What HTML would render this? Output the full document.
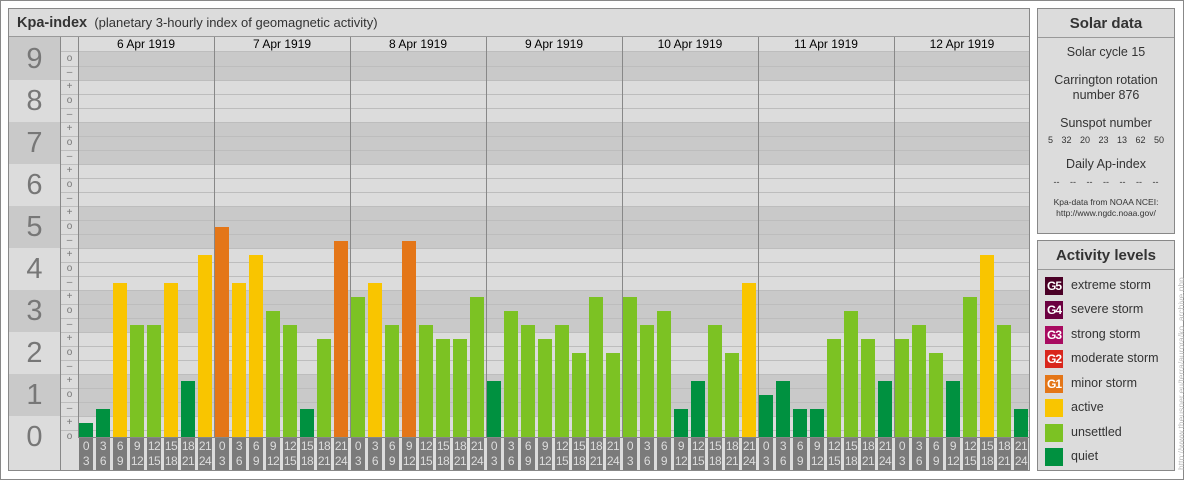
<!DOCTYPE html><html><head><style>
*{margin:0;padding:0;box-sizing:border-box}
body{width:1184px;height:480px;background:#fff;position:relative;overflow:hidden;font-family:"Liberation Sans",sans-serif}
.a{position:absolute}
.bd{background:#c9c9c9}.bl{background:#dcdcdc}
.num{position:absolute;left:9px;width:51px;text-align:center;font-size:29px;color:#777;}
.sg{position:absolute;left:61px;width:17px;text-align:center;font-size:10px;color:#777;height:14px;line-height:14px}
.gl{position:absolute;left:61px;width:968px;height:1px;background:#bdbdbd}
.vl{position:absolute;top:37px;width:1px;height:401px;background:#888}
.bar{position:absolute;width:14px}
.q{background:#009140}.u{background:#7cc223}.y{background:#f9c500}.o{background:#e47618}
.lb{position:absolute;top:438px;width:14px;height:32px;background:#7b7b7b;color:#ddd;font-size:12px;line-height:15px;text-align:center;letter-spacing:-0.5px;padding-top:1px}
.dt{position:absolute;top:37px;height:14px;width:136px;text-align:center;font-size:12px;line-height:15px;color:#000}
.pn{position:absolute;background:#dcdcdc;border:1px solid #888}
.pt{height:29px;border-bottom:1px solid #999;text-align:center;font-weight:bold;font-size:15px;line-height:29px;color:#333}
.st{text-align:center;color:#333;font-size:12.5px}
.li{position:absolute;left:7px;height:20px;font-size:12.5px;color:#333;line-height:20px}
.li i{display:inline-block;width:18px;height:18px;vertical-align:middle;margin-right:8px;color:#fff;font-style:normal;font-size:12px;line-height:18px;text-align:center;font-weight:bold;letter-spacing:-1px}
</style></head><body>
<div class="a" style="left:0;top:0;width:1184px;height:480px;border:1px solid #888"></div>
<div class="a" style="left:8px;top:8px;width:1022px;height:463px;border:1px solid #888;background:#dcdcdc"></div>
<div class="a" style="left:9px;top:9px;width:1020px;height:28px;border-bottom:1px solid #999;font-size:13px;line-height:28px;color:#333;padding-left:8px"><b style="font-size:14.5px">Kpa-index</b>&nbsp; (planetary 3-hourly index of geomagnetic activity)</div>
<div class="a bd" style="left:9px;top:37px;width:52px;height:43px"></div>
<div class="a bd" style="left:78px;top:51px;width:951px;height:29px"></div>
<div class="a bd" style="left:9px;top:122px;width:52px;height:42px"></div><div class="a bd" style="left:78px;top:122px;width:951px;height:42px"></div>
<div class="a bd" style="left:9px;top:206px;width:52px;height:42px"></div><div class="a bd" style="left:78px;top:206px;width:951px;height:42px"></div>
<div class="a bd" style="left:9px;top:290px;width:52px;height:42px"></div><div class="a bd" style="left:78px;top:290px;width:951px;height:42px"></div>
<div class="a bd" style="left:9px;top:374px;width:52px;height:42px"></div><div class="a bd" style="left:78px;top:374px;width:951px;height:42px"></div>
<div class="gl" style="top:51px"></div><div class="gl" style="top:66px"></div><div class="gl" style="top:80px"></div><div class="gl" style="top:94px"></div><div class="gl" style="top:108px"></div><div class="gl" style="top:122px"></div><div class="gl" style="top:136px"></div><div class="gl" style="top:150px"></div><div class="gl" style="top:164px"></div><div class="gl" style="top:178px"></div><div class="gl" style="top:192px"></div><div class="gl" style="top:206px"></div><div class="gl" style="top:220px"></div><div class="gl" style="top:234px"></div><div class="gl" style="top:248px"></div><div class="gl" style="top:262px"></div><div class="gl" style="top:276px"></div><div class="gl" style="top:290px"></div><div class="gl" style="top:304px"></div><div class="gl" style="top:318px"></div><div class="gl" style="top:332px"></div><div class="gl" style="top:346px"></div><div class="gl" style="top:360px"></div><div class="gl" style="top:374px"></div><div class="gl" style="top:388px"></div><div class="gl" style="top:402px"></div><div class="gl" style="top:416px"></div><div class="gl" style="top:430px"></div>
<div class="a" style="left:78px;top:437px;width:951px;height:1px;background:#888"></div>
<div class="a" style="left:60px;top:37px;width:1px;height:434px;background:#888"></div>
<div class="vl" style="left:78px"></div><div class="vl" style="left:214px"></div><div class="vl" style="left:350px"></div><div class="vl" style="left:486px"></div><div class="vl" style="left:622px"></div><div class="vl" style="left:758px"></div><div class="vl" style="left:894px"></div>
<div class="num" style="top:43px">9</div><div class="num" style="top:85px">8</div><div class="num" style="top:127px">7</div><div class="num" style="top:169px">6</div><div class="num" style="top:211px">5</div><div class="num" style="top:253px">4</div><div class="num" style="top:295px">3</div><div class="num" style="top:337px">2</div><div class="num" style="top:379px">1</div><div class="num" style="top:421px">0</div>
<div class="sg" style="top:52px">o</div><div class="sg" style="top:66px">–</div>
<div class="sg" style="top:80px">+</div><div class="sg" style="top:94px">o</div><div class="sg" style="top:108px">–</div>
<div class="sg" style="top:122px">+</div><div class="sg" style="top:136px">o</div><div class="sg" style="top:150px">–</div>
<div class="sg" style="top:164px">+</div><div class="sg" style="top:178px">o</div><div class="sg" style="top:192px">–</div>
<div class="sg" style="top:206px">+</div><div class="sg" style="top:220px">o</div><div class="sg" style="top:234px">–</div>
<div class="sg" style="top:248px">+</div><div class="sg" style="top:262px">o</div><div class="sg" style="top:276px">–</div>
<div class="sg" style="top:290px">+</div><div class="sg" style="top:304px">o</div><div class="sg" style="top:318px">–</div>
<div class="sg" style="top:332px">+</div><div class="sg" style="top:346px">o</div><div class="sg" style="top:360px">–</div>
<div class="sg" style="top:374px">+</div><div class="sg" style="top:388px">o</div><div class="sg" style="top:402px">–</div>
<div class="sg" style="top:416px">+</div><div class="sg" style="top:430px">o</div>
<div class="dt" style="left:78px">6 Apr 1919</div><div class="dt" style="left:214px">7 Apr 1919</div><div class="dt" style="left:350px">8 Apr 1919</div><div class="dt" style="left:486px">9 Apr 1919</div><div class="dt" style="left:622px">10 Apr 1919</div><div class="dt" style="left:758px">11 Apr 1919</div><div class="dt" style="left:894px">12 Apr 1919</div>
<div class="bar q" style="left:79px;top:423px;height:14px"></div><div class="bar q" style="left:96px;top:409px;height:28px"></div><div class="bar y" style="left:113px;top:283px;height:154px"></div><div class="bar u" style="left:130px;top:325px;height:112px"></div><div class="bar u" style="left:147px;top:325px;height:112px"></div><div class="bar y" style="left:164px;top:283px;height:154px"></div><div class="bar q" style="left:181px;top:381px;height:56px"></div><div class="bar y" style="left:198px;top:255px;height:182px"></div>
<div class="bar o" style="left:215px;top:227px;height:210px"></div><div class="bar y" style="left:232px;top:283px;height:154px"></div><div class="bar y" style="left:249px;top:255px;height:182px"></div><div class="bar u" style="left:266px;top:311px;height:126px"></div><div class="bar u" style="left:283px;top:325px;height:112px"></div><div class="bar q" style="left:300px;top:409px;height:28px"></div><div class="bar u" style="left:317px;top:339px;height:98px"></div><div class="bar o" style="left:334px;top:241px;height:196px"></div>
<div class="bar u" style="left:351px;top:297px;height:140px"></div><div class="bar y" style="left:368px;top:283px;height:154px"></div><div class="bar u" style="left:385px;top:325px;height:112px"></div><div class="bar o" style="left:402px;top:241px;height:196px"></div><div class="bar u" style="left:419px;top:325px;height:112px"></div><div class="bar u" style="left:436px;top:339px;height:98px"></div><div class="bar u" style="left:453px;top:339px;height:98px"></div><div class="bar u" style="left:470px;top:297px;height:140px"></div>
<div class="bar q" style="left:487px;top:381px;height:56px"></div><div class="bar u" style="left:504px;top:311px;height:126px"></div><div class="bar u" style="left:521px;top:325px;height:112px"></div><div class="bar u" style="left:538px;top:339px;height:98px"></div><div class="bar u" style="left:555px;top:325px;height:112px"></div><div class="bar u" style="left:572px;top:353px;height:84px"></div><div class="bar u" style="left:589px;top:297px;height:140px"></div><div class="bar u" style="left:606px;top:353px;height:84px"></div>
<div class="bar u" style="left:623px;top:297px;height:140px"></div><div class="bar u" style="left:640px;top:325px;height:112px"></div><div class="bar u" style="left:657px;top:311px;height:126px"></div><div class="bar q" style="left:674px;top:409px;height:28px"></div><div class="bar q" style="left:691px;top:381px;height:56px"></div><div class="bar u" style="left:708px;top:325px;height:112px"></div><div class="bar u" style="left:725px;top:353px;height:84px"></div><div class="bar y" style="left:742px;top:283px;height:154px"></div>
<div class="bar q" style="left:759px;top:395px;height:42px"></div><div class="bar q" style="left:776px;top:381px;height:56px"></div><div class="bar q" style="left:793px;top:409px;height:28px"></div><div class="bar q" style="left:810px;top:409px;height:28px"></div><div class="bar u" style="left:827px;top:339px;height:98px"></div><div class="bar u" style="left:844px;top:311px;height:126px"></div><div class="bar u" style="left:861px;top:339px;height:98px"></div><div class="bar q" style="left:878px;top:381px;height:56px"></div>
<div class="bar u" style="left:895px;top:339px;height:98px"></div><div class="bar u" style="left:912px;top:325px;height:112px"></div><div class="bar u" style="left:929px;top:353px;height:84px"></div><div class="bar q" style="left:946px;top:381px;height:56px"></div><div class="bar u" style="left:963px;top:297px;height:140px"></div><div class="bar y" style="left:980px;top:255px;height:182px"></div><div class="bar u" style="left:997px;top:325px;height:112px"></div><div class="bar q" style="left:1014px;top:409px;height:28px"></div>
<div class="lb" style="left:79px">0<br>3</div><div class="lb" style="left:96px">3<br>6</div><div class="lb" style="left:113px">6<br>9</div><div class="lb" style="left:130px">9<br>12</div><div class="lb" style="left:147px">12<br>15</div><div class="lb" style="left:164px">15<br>18</div><div class="lb" style="left:181px">18<br>21</div><div class="lb" style="left:198px">21<br>24</div>
<div class="lb" style="left:215px">0<br>3</div><div class="lb" style="left:232px">3<br>6</div><div class="lb" style="left:249px">6<br>9</div><div class="lb" style="left:266px">9<br>12</div><div class="lb" style="left:283px">12<br>15</div><div class="lb" style="left:300px">15<br>18</div><div class="lb" style="left:317px">18<br>21</div><div class="lb" style="left:334px">21<br>24</div>
<div class="lb" style="left:351px">0<br>3</div><div class="lb" style="left:368px">3<br>6</div><div class="lb" style="left:385px">6<br>9</div><div class="lb" style="left:402px">9<br>12</div><div class="lb" style="left:419px">12<br>15</div><div class="lb" style="left:436px">15<br>18</div><div class="lb" style="left:453px">18<br>21</div><div class="lb" style="left:470px">21<br>24</div>
<div class="lb" style="left:487px">0<br>3</div><div class="lb" style="left:504px">3<br>6</div><div class="lb" style="left:521px">6<br>9</div><div class="lb" style="left:538px">9<br>12</div><div class="lb" style="left:555px">12<br>15</div><div class="lb" style="left:572px">15<br>18</div><div class="lb" style="left:589px">18<br>21</div><div class="lb" style="left:606px">21<br>24</div>
<div class="lb" style="left:623px">0<br>3</div><div class="lb" style="left:640px">3<br>6</div><div class="lb" style="left:657px">6<br>9</div><div class="lb" style="left:674px">9<br>12</div><div class="lb" style="left:691px">12<br>15</div><div class="lb" style="left:708px">15<br>18</div><div class="lb" style="left:725px">18<br>21</div><div class="lb" style="left:742px">21<br>24</div>
<div class="lb" style="left:759px">0<br>3</div><div class="lb" style="left:776px">3<br>6</div><div class="lb" style="left:793px">6<br>9</div><div class="lb" style="left:810px">9<br>12</div><div class="lb" style="left:827px">12<br>15</div><div class="lb" style="left:844px">15<br>18</div><div class="lb" style="left:861px">18<br>21</div><div class="lb" style="left:878px">21<br>24</div>
<div class="lb" style="left:895px">0<br>3</div><div class="lb" style="left:912px">3<br>6</div><div class="lb" style="left:929px">6<br>9</div><div class="lb" style="left:946px">9<br>12</div><div class="lb" style="left:963px">12<br>15</div><div class="lb" style="left:980px">15<br>18</div><div class="lb" style="left:997px">18<br>21</div><div class="lb" style="left:1014px">21<br>24</div>
<div class="pn" style="left:1037px;top:8px;width:138px;height:226px">
<div class="pt">Solar data</div>
<div class="st" style="margin-top:7px">Solar cycle 15</div>
<div class="st" style="margin-top:14px;line-height:15px">Carrington rotation<br>number 876</div>
<div class="st" style="margin-top:13px">Sunspot number</div>
<div class="st" style="font-size:9px;margin-top:5px;word-spacing:6px">5 32 20 23 13 62 50</div>
<div class="st" style="margin-top:12px">Daily Ap-index</div>
<div class="st" style="font-size:9px;margin-top:6px;word-spacing:8px">-- -- -- -- -- -- --</div>
<div class="st" style="font-size:8.5px;margin-top:10px;line-height:11px">Kpa-data from NOAA NCEI:<br>http://www.ngdc.noaa.gov/</div>
</div>
<div class="pn" style="left:1037px;top:240px;width:138px;height:231px">
<div class="pt">Activity levels</div>
<div class="li" style="top:34px"><i style="background:#4a0026">G5</i>extreme storm</div>
<div class="li" style="top:58px"><i style="background:#6b0040">G4</i>severe storm</div>
<div class="li" style="top:83px"><i style="background:#a80b60">G3</i>strong storm</div>
<div class="li" style="top:107px"><i style="background:#d9261c">G2</i>moderate storm</div>
<div class="li" style="top:132px"><i style="background:#e47618">G1</i>minor storm</div>
<div class="li" style="top:156px"><i style="background:#f9c500"></i>active</div>
<div class="li" style="top:181px"><i style="background:#7cc223"></i>unsettled</div>
<div class="li" style="top:205px"><i style="background:#009140"></i>quiet</div>
</div>
<div class="a" style="left:1176px;top:470px;transform-origin:0 0;transform:rotate(-90deg);font-size:8.5px;color:#bbb;white-space:nowrap;width:230px">http://www.theusner.eu/terra/aurora/ko_archive.php</div>
</body></html>
